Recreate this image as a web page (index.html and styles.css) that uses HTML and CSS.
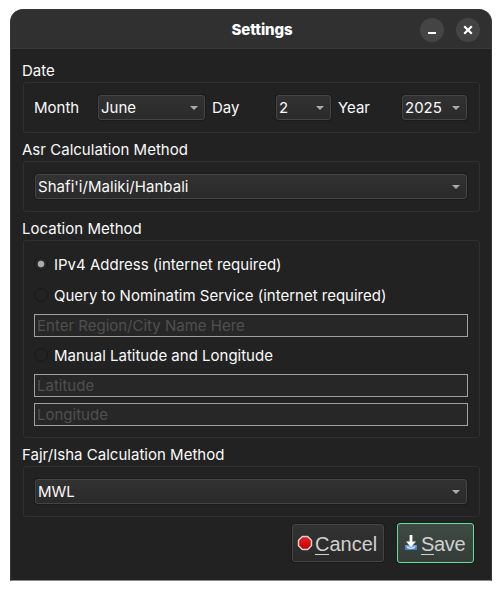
FILE: index.html
```html
<!DOCTYPE html>
<html lang="en">
<head>
<meta charset="utf-8">
<title>Settings</title>
<link rel="stylesheet" href="styles.css">
</head>
<body>
<main class="window">
  <header class="titlebar">
    <h1 class="title">Settings</h1>
    <div class="controls">
      <span class="control"><svg width="24" height="24"><path d="M8 15h8" stroke="#fff" stroke-width="2"/></svg></span>
      <span class="control"><svg width="24" height="24"><path d="M8.2 8.2l7.6 7.6M15.8 8.2l-7.6 7.6" stroke="#fff" stroke-width="2.2"/></svg></span>
    </div>
  </header>
  <div class="content">
    <h2 class="label">Date</h2>
    <section class="group date">
      <span class="month-label">Month</span>
      <div class="combo month"><span>June</span><svg class="arrow" width="8" height="4"><path d="M0 0h8L4 4z"/></svg></div>
      <span class="day-label">Day</span>
      <div class="combo day"><span>2</span><svg class="arrow" width="8" height="4"><path d="M0 0h8L4 4z"/></svg></div>
      <span class="year-label">Year</span>
      <div class="combo year"><span>2025</span><svg class="arrow" width="8" height="4"><path d="M0 0h8L4 4z"/></svg></div>
    </section>
    <h2 class="label">Asr Calculation Method</h2>
    <section class="group">
      <div class="combo"><span class="wide">Shafi'i/Maliki/Hanbali</span><svg class="arrow" width="8" height="4"><path d="M0 0h8L4 4z"/></svg></div>
    </section>
    <h2 class="label">Location Method</h2>
    <section class="group location">
      <div class="option"><i class="radio checked"></i><span>IPv4 Address (internet required)</span></div>
      <div class="option query"><i class="radio"></i><span>Query to Nominatim Service (internet required)</span></div>
      <div class="field">Enter Region/City Name Here</div>
      <div class="option manual"><i class="radio"></i><span>Manual Latitude and Longitude</span></div>
      <div class="field">Latitude</div>
      <div class="field longitude">Longitude</div>
    </section>
    <h2 class="label">Fajr/Isha Calculation Method</h2>
    <section class="group">
      <div class="combo"><span>MWL</span><svg class="arrow" width="8" height="4"><path d="M0 0h8L4 4z"/></svg></div>
    </section>
    <footer class="actions">
      <div class="button cancel">
        <svg width="16" height="16" viewBox="0 0 16 16"><defs><linearGradient id="red" x2="0" y2="1"><stop stop-color="#e52020"/><stop offset="1" stop-color="#c40000"/></linearGradient></defs><path d="M5 1h6l4 4v6l-4 4H5l-4-4V5z" fill="#e8e8e3" stroke="#aaa9a5" stroke-width=".6"/><path d="M5.5 2.2h5l3.3 3.3v5l-3.3 3.3h-5l-3.3-3.3v-5z" fill="url(#red)"/></svg>
        <span class="caption"><span class="mnemonic">C</span>ancel</span>
      </div>
      <div class="button save">
        <svg width="14" height="16" viewBox="0 0 14 16"><path d="M1 10h12v5H1z" fill="#4b7fc4"/><path d="M1.5 10.5h11v1.5h-11z" fill="#83aee2"/><path d="M3 12.2q4 2 8 0" fill="none" stroke="#d8e4f3" stroke-width="1.6"/><path d="M5.6 0h2.8v6.5H12L7 12 2 6.5h3.6z" fill="#fff"/></svg>
        <span class="caption"><span class="mnemonic">S</span>ave</span>
      </div>
    </footer>
  </div>
</main>
</body>
</html>
```
FILE: styles.css
```css
* { box-sizing: border-box; }
body {
  margin: 0;
  padding: 9px 10px;
  background: #fff;
  color: #fafafa;
  font: 15px/20px Inter, sans-serif;
  white-space: nowrap;
}
.window {
  width: 482px;
  height: 572px;
  overflow: hidden;
  background: #222;
  border: 1px solid #383838;
  border-bottom-color: #8a8a8a;
  border-radius: 13px 13px 0 0;
}
.titlebar {
  display: grid;
  grid-template-columns: 1fr auto 1fr;
  align-items: center;
  height: 39px;
  padding: 1px 11px 0 22px;
  background: #303030;
  border-bottom: 1px solid #393939;
}
.title {
  grid-column: 2;
  margin: 0 -11px 0 0;
  color: #fff;
  font-size: 15px;
  font-weight: 800;
  line-height: 20px;
  letter-spacing: -0.1px;
}
.controls { display: flex; justify-content: flex-end; gap: 12px; }
.control { width: 24px; height: 24px; border-radius: 50%; background: #444; }
.control svg { display: block; }
.content { padding: 5px 11px 0 12px; }
.label { margin: 0 0 0 -1px; height: 28px; padding-top: 7px; font-size: 15px; font-weight: 400; line-height: 20px; letter-spacing: 0.02px; }
.group { height: 51px; padding: 12px 12px 0 11px; border: 1px solid #303030; border-radius: 3px; }
.combo {
  display: flex;
  align-items: center;
  justify-content: space-between;
  height: 25px;
  padding: 0 6px 0 2px;
  background: linear-gradient(#323232, #2a2a2a);
  border: 1px solid #454545;
  border-radius: 3px;
  box-shadow: 0 0 0 1px #1b1b1b;
}
.wide { letter-spacing: 0.04px; }
.arrow { fill: #aaa; }
.date { display: flex; padding-left: 10px; line-height: 25px; }
.month-label { width: 64px; }
.month { width: 107px; margin-right: 7px; }
.day-label { width: 64px; }
.day { width: 55px; margin-right: 7px; }
.year-label { width: 64px; }
.year { width: 65px; }
.location { height: 198px; padding: 13px 11px 0 10px; }
.option { display: flex; align-items: center; height: 20px; gap: 6px; }
.option span { padding-top: 2px; }
.query { margin-top: 11px; }
.radio { width: 14px; height: 14px; border: 1px solid #191919; border-radius: 50%; background: #222; }
.checked { background: radial-gradient(circle, #aaa 0 3px, #272727 3.7px); }
.field { height: 23px; margin-top: 9px; padding-left: 2px; border: 1px solid #a0a0a0; background: #272727; color: #505050; line-height: 21px; }
.manual { margin-top: 8px; }
.longitude { margin-top: 6px; }
.actions { display: flex; justify-content: flex-end; align-items: center; gap: 13px; margin: 6px 6px 0 0; }
.button {
  display: flex;
  align-items: center;
  height: 38px;
  border: 1px solid #454545;
  border-radius: 3px;
  background: linear-gradient(#323232, #2a2a2a);
  box-shadow: 0 0 0 1px #1b1b1b;
  color: #d0d0d0;
  font: 20px/24px "Liberation Sans", Arial, sans-serif;
}
.caption { padding-top: 2px; }
.cancel { width: 92px; gap: 2px; padding-left: 4px; }
.save { width: 77px; height: 40px; gap: 3px; padding-left: 6px; border-color: #60e698; background: linear-gradient(#404a45, #343d38); letter-spacing: -0.35px; }
.mnemonic { display: inline-block; height: 23px; border-bottom: 1px solid #d0d0d0; }
```
